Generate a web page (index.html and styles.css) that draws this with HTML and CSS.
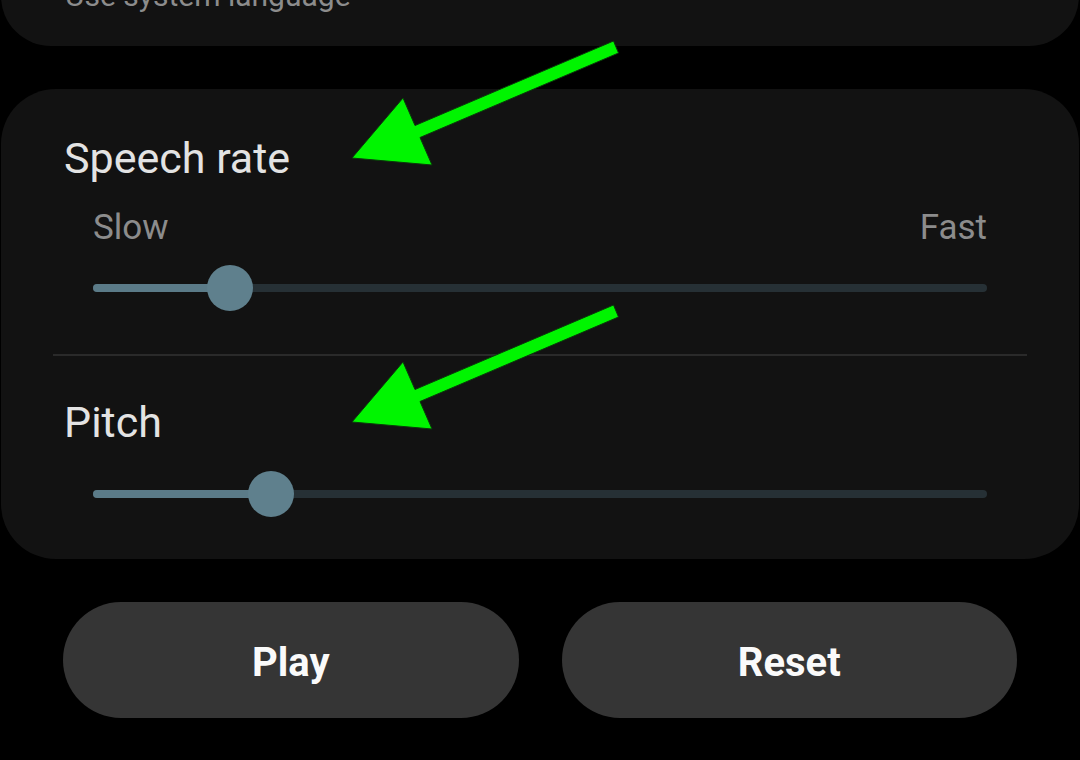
FILE: index.html
```html
<!DOCTYPE html>
<html lang="en">
<head>
<meta charset="utf-8">
<title>Text-to-speech</title>
<link rel="stylesheet" href="styles.css">
</head>
<body>
<div class="screen">
  <section class="card card-lang">
    <div class="subtitle">Use system language</div>
  </section>

  <section class="card card-speech">
    <div class="title">Speech rate</div>
    <div class="range-labels"><span>Slow</span><span>Fast</span></div>
    <div class="slider" style="--v:15.3%">
      <div class="track"></div>
      <div class="fill"></div>
      <div class="thumb"></div>
    </div>
    <div class="divider"></div>
    <div class="title title-pitch">Pitch</div>
    <div class="slider slider-pitch" style="--v:19.9%">
      <div class="track"></div>
      <div class="fill"></div>
      <div class="thumb"></div>
    </div>
  </section>

  <div class="buttons">
    <button class="btn">Play</button>
    <button class="btn">Reset</button>
  </div>

  <svg class="arrows" width="1080" height="760" viewBox="0 0 1080 760">
    <polygon class="arrow" points="613.5,41 618.5,53 420,137.5 432,165 352,158 403,98 415,125.5"/>
    <polygon class="arrow" transform="translate(0 264)" points="613.5,41 618.5,53 420,137.5 432,165 352,158 403,98 415,125.5"/>
  </svg>
</div>
</body>
</html>
```

FILE: styles.css
```css
html, body {
  margin: 0;
  padding: 0;
  background: #000;
}

body {
  font-family: Roboto, "Liberation Sans", sans-serif;
  width: 1080px;
  height: 760px;
  overflow: hidden;
}

.screen {
  position: relative;
  width: 1080px;
  height: 760px;
  display: flex;
  flex-direction: column;
}

.card {
  background: #121212;
  margin: 0 1px;
  box-sizing: border-box;
}

.card-lang {
  margin-top: -54px;
  height: 100px;
  padding: 32px 64px 0;
  border-radius: 52px;
}

.subtitle {
  font-size: 30px;
  line-height: 36px;
  color: #8c8c8c;
}

.card-speech {
  margin-top: 43px;
  padding: 44px 0 42px;
  border-radius: 55px;
}

.title {
  padding: 0 63px;
  font-size: 43px;
  line-height: 50px;
  color: #e3e3e3;
}

.title-pitch {
  margin-top: 41px;
}

.range-labels {
  margin: 25px 92px 0;
  display: flex;
  justify-content: space-between;
  font-size: 35px;
  line-height: 40px;
  color: #8c8c8c;
}

.slider {
  position: relative;
  margin: 17px 92px 0;
  height: 46px;
  display: flex;
  align-items: center;
}

.slider-pitch {
  margin-top: 24px;
}

.track {
  flex: 1;
  height: 8px;
  border-radius: 4px;
  background: #263035;
}

.fill {
  position: absolute;
  left: 0;
  top: 19px;
  width: var(--v);
  height: 8px;
  border-radius: 4px;
  background: #5b7b88;
}

.thumb {
  position: absolute;
  top: 0;
  left: calc(var(--v) - 23px);
  width: 46px;
  height: 46px;
  border-radius: 50%;
  background: #5f808d;
}

.divider {
  margin: 43px 52px 0;
  height: 2px;
  background: #2a2a2a;
}

.buttons {
  margin-top: 43px;
  padding: 0 63px;
  display: flex;
  gap: 43px;
}

.btn {
  flex: 1;
  height: 116px;
  border: none;
  border-radius: 58px;
  background: #353535;
  color: #fafafa;
  font-family: Roboto, "Liberation Sans", sans-serif;
  font-size: 40px;
  font-weight: 700;
  padding: 4px 0 0;
}

.arrows {
  position: absolute;
  left: 0;
  top: 0;
  pointer-events: none;
}

.arrow {
  fill: #00f500;
  stroke: #0a3a0a;
  stroke-width: 1;
  stroke-linejoin: miter;
}
```
